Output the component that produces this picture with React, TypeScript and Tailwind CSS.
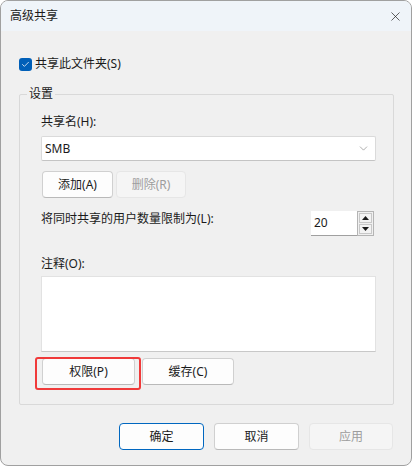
import { ChevronDown, X, Check } from 'lucide-react'

function Btn({ label, w, disabled, primary }: { label: string; w: string; disabled?: boolean; primary?: boolean }) {
  const base = 'flex items-center justify-center rounded-[4px] border text-[12px] leading-none'
  const tone = disabled
    ? 'bg-[#f5f5f5] border-[#e6e6e6] text-[#9d9d9d]'
    : primary
      ? 'bg-[#fdfdfd] border-[#0067c0] text-[#1b1b1b]'
      : 'bg-[#fdfdfd] border-[#d0d0d0] border-b-[#b9b9b9] text-[#1b1b1b]'
  return <div className={`${base} ${tone} ${w}`}>{label}</div>
}

export default function App() {
  return (
    <div className="w-[412px] h-[466px] bg-white font-['Noto_Sans','Noto_Sans_CJK_SC',sans-serif] text-[#1b1b1b]">
      <div className="w-[412px] h-[466px] flex flex-col rounded-[8px] border border-[#a0a0a0] bg-[#f0f0f0] overflow-hidden">
        {/* title bar */}
        <div className="h-[30px] shrink-0 bg-[#eff4f9] flex items-center justify-between pl-[9px] pr-[8px]">
          <span className="text-[12px] leading-none">高级共享</span>
          <X size={15} strokeWidth={1.1} className="text-[#1b1b1b]" />
        </div>

        {/* checkbox */}
        <div className="mt-[26px] ml-[18px] flex items-center gap-[3px] h-[14px]">
          <div className="w-[13px] h-[13px] rounded-[3px] bg-[#005fb8] flex items-center justify-center">
            <Check size={9} strokeWidth={2} className="text-white" />
          </div>
          <span className="text-[12px] leading-none">共享此文件夹(S)</span>
        </div>

        {/* group */}
        <div className="relative mt-[23px] ml-[18px] w-[375px] h-[311px] border border-[#d9d9d9] rounded-[2px] pl-[21px] pt-[19px]">
          <span className="absolute -top-[9px] left-[7px] px-[2px] bg-[#f0f0f0] text-[12px] leading-[16px]">设置</span>

          <div className="text-[12px] leading-[16px]">共享名(H):</div>
          <div className="mt-[6px] w-[335px] h-[25px] bg-white border border-[#dadada] border-b-[#c4c4c4] rounded-[2px] flex items-center justify-between pl-[3px] pr-[5px]">
            <span className="text-[12px] leading-none">SMB</span>
            <ChevronDown size={13} strokeWidth={1} className="text-[#6a6a6a]" />
          </div>

          <div className="mt-[10px] ml-[1px] flex gap-[3px]">
            <Btn label="添加(A)" w="w-[71px] h-[27px]" />
            <Btn label="删除(R)" w="w-[70px] h-[27px]" disabled />
          </div>

          <div className="mt-[13px] w-[336px] flex items-start justify-between">
            <span className="text-[12px] leading-[16px]">将同时共享的用户数量限制为(L):</span>
            <div className="flex mr-[3px]">
              <div className="w-[46px] h-[25px] bg-white border-b border-[#a0a0a0] flex items-center pl-[3px] text-[12px]">20</div>
              <div className="w-[17px] h-[25px] border border-[#b4b4b4] bg-[#f0f0f0] flex flex-col p-[1px] gap-[1px]">
                <div className="flex-1 border border-[#c8c8c8] bg-[#f3f3f3] flex items-center justify-center">
                  <svg width="7" height="4" viewBox="0 0 7 4"><path d="M0 4 L3.5 0 L7 4 Z" fill="#1b1b1b" /></svg>
                </div>
                <div className="flex-1 border border-[#c8c8c8] bg-[#f3f3f3] flex items-center justify-center">
                  <svg width="7" height="4" viewBox="0 0 7 4"><path d="M0 0 L3.5 4 L7 0 Z" fill="#1b1b1b" /></svg>
                </div>
              </div>
            </div>
          </div>

          <div className="mt-[20px] text-[12px] leading-[16px]">注释(O):</div>
          <div className="mt-[4px] w-[335px] h-[76px] bg-white border border-[#e2e2e2] border-b-[#c8c8c8]" />

          <div className="mt-[6px] ml-[1px] flex gap-[7px]">
            <div className="relative">
              <Btn label="权限(P)" w="w-[93px] h-[27px]" />
              <div className="absolute -left-[7px] -top-[1px] w-[106px] h-[33px] border-2 border-[#f03a3a] rounded-[3px]" />
            </div>
            <Btn label="缓存(C)" w="w-[92px] h-[27px]" />
          </div>
        </div>

        {/* footer */}
        <div className="mt-[18px] pr-[18px] flex justify-end gap-[10px]">
          <Btn label="确定" w="w-[85px] h-[27px]" primary />
          <Btn label="取消" w="w-[85px] h-[27px]" />
          <Btn label="应用" w="w-[84px] h-[27px]" disabled />
        </div>
      </div>
    </div>
  )
}
